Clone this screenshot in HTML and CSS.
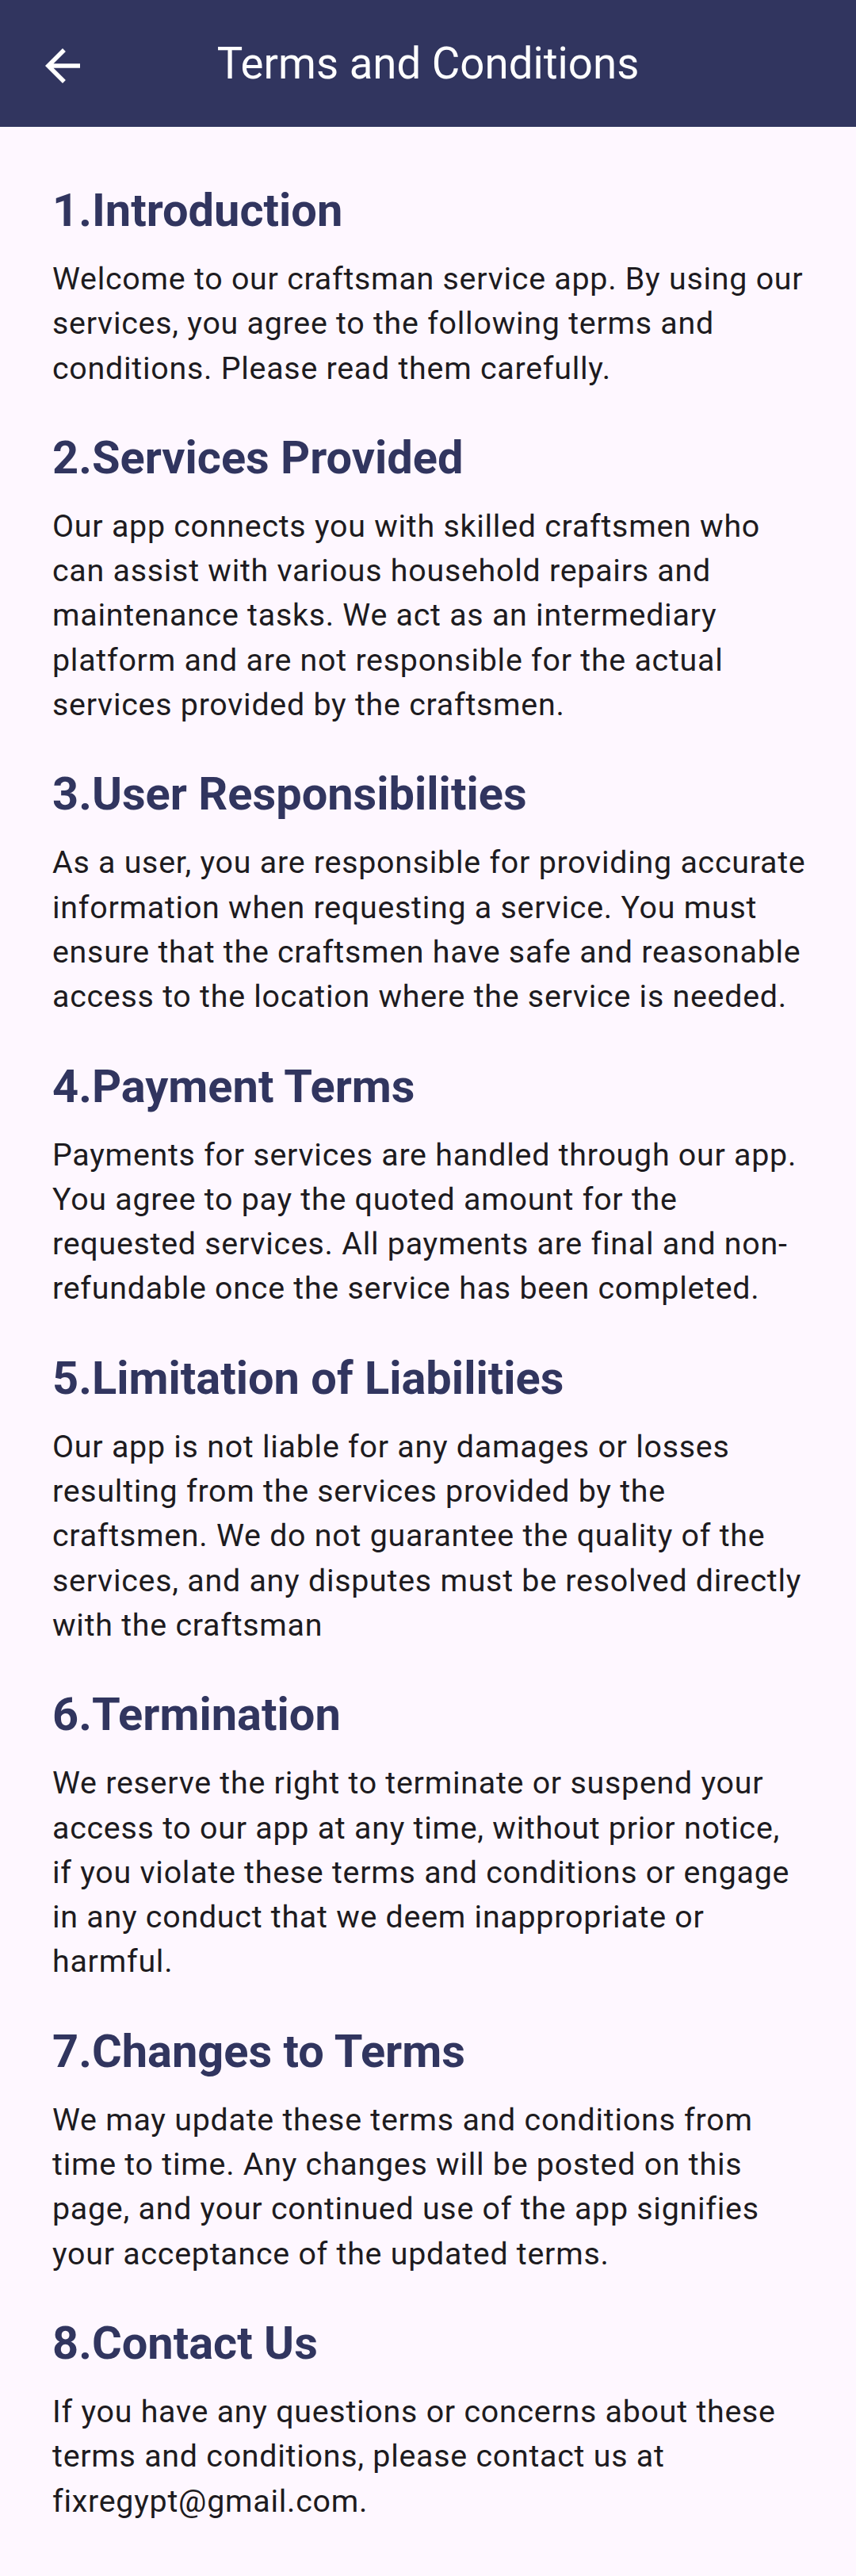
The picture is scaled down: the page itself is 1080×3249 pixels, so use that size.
FILE: index.html
```html
<!DOCTYPE html>
<html lang="en">
<head>
<meta charset="utf-8">
<title>Terms and Conditions</title>
<link rel="stylesheet" href="styles.css">
</head>
<body>
<header class="app-bar">
  <div class="app-bar__leading">
    <button class="back-btn" aria-label="Back">
      <svg viewBox="0 0 24 24" width="66" height="66" aria-hidden="true">
        <path fill="#ffffff" d="M20 11H7.83l5.59-5.59L12 4l-8 8 8 8 1.41-1.41L7.83 13H20v-2z"/>
      </svg>
    </button>
  </div>
  <h1 class="app-bar__title">Terms and Conditions</h1>
  <div class="app-bar__trailing"></div>
</header>

<main class="terms">
  <section class="terms__section">
    <h2 class="terms__heading">1.Introduction</h2>
    <p class="terms__body">Welcome to our craftsman service app. By using our services, you agree to the following terms and conditions. Please read them carefully.</p>
  </section>
  <section class="terms__section">
    <h2 class="terms__heading">2.Services Provided</h2>
    <p class="terms__body">Our app connects you with skilled craftsmen who can assist with various household repairs and maintenance tasks. We act as an intermediary platform and are not responsible for the actual services provided by the craftsmen.</p>
  </section>
  <section class="terms__section">
    <h2 class="terms__heading">3.User Responsibilities</h2>
    <p class="terms__body">As a user, you are responsible for providing accurate information when requesting a service. You must ensure that the craftsmen have safe and reasonable access to the location where the service is needed.</p>
  </section>
  <section class="terms__section">
    <h2 class="terms__heading">4.Payment Terms</h2>
    <p class="terms__body">Payments for services are handled through our app. You agree to pay the quoted amount for the requested services. All payments are final and non-refundable once the service has been completed.</p>
  </section>
  <section class="terms__section">
    <h2 class="terms__heading">5.Limitation of Liabilities</h2>
    <p class="terms__body">Our app is not liable for any damages or losses resulting from the services provided by the craftsmen. We do not guarantee the quality of the services, and any disputes must be resolved directly with the craftsman</p>
  </section>
  <section class="terms__section">
    <h2 class="terms__heading">6.Termination</h2>
    <p class="terms__body">We reserve the right to terminate or suspend your access to our app at any time, without prior notice, if you violate these terms and conditions or engage in any conduct that we deem inappropriate or harmful.</p>
  </section>
  <section class="terms__section">
    <h2 class="terms__heading">7.Changes to Terms</h2>
    <p class="terms__body">We may update these terms and conditions from time to time. Any changes will be posted on this page, and your continued use of the app signifies your acceptance of the updated terms.</p>
  </section>
  <section class="terms__section">
    <h2 class="terms__heading">8.Contact Us</h2>
    <p class="terms__body">If you have any questions or concerns about these terms and conditions, please contact us at fixregypt@gmail.com.</p>
  </section>
</main>
</body>
</html>
```
FILE: styles.css
```css
* { box-sizing: border-box; }

html, body {
  margin: 0;
  padding: 0;
}

body {
  background: #fef7ff;
  font-family: Roboto, "Noto Sans", "Liberation Sans", sans-serif;
  color: #1d1b20;
  min-height: 3249px;
}

.app-bar {
  height: 160px;
  background: #31355f;
  display: grid;
  grid-template-columns: 1fr auto 1fr;
  align-items: center;
}

.app-bar__leading {
  display: flex;
  align-items: center;
  padding-left: 46px;
}

.back-btn {
  background: none;
  border: 0;
  padding: 0;
  margin: 5px 0 0 0;
  width: 66px;
  height: 66px;
  display: flex;
}

.app-bar__title {
  margin: 0;
  font-weight: 400;
  font-size: 54.6px;
  line-height: 68px;
  color: #ffffff;
  white-space: nowrap;
}

.terms {
  padding: 71px 62px 40px 66px;
  display: flex;
  flex-direction: column;
  gap: 50px;
}

.terms__section {
  display: flex;
  flex-direction: column;
  gap: 25px;
}

.terms__heading {
  margin: 0;
  font-size: 57.75px;
  line-height: 68px;
  font-weight: 700;
  color: #31355f;
}

.terms__body {
  margin: 0;
  font-size: 39.375px;
  line-height: 56.3px;
  letter-spacing: 0.75px;
  color: #1d1b20;
}
```
